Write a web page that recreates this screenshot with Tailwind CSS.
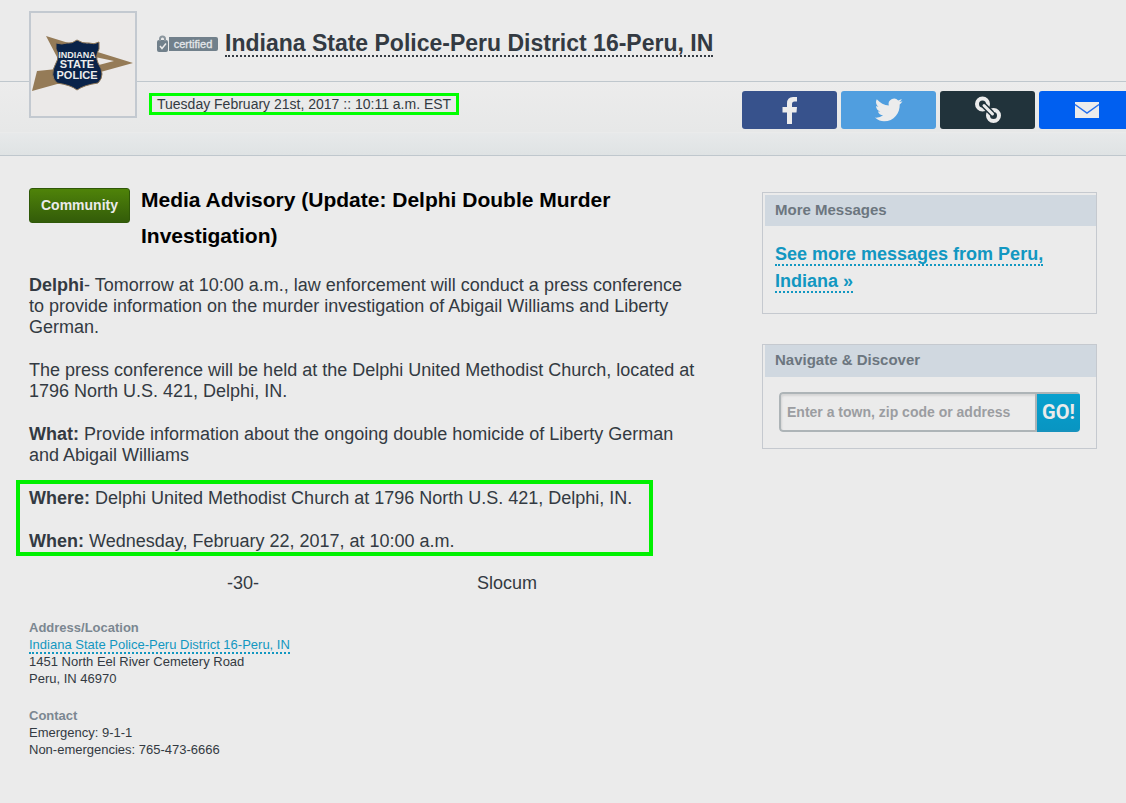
<!DOCTYPE html>
<html lang="en">
<head>
  <meta charset="UTF-8">
  <meta name="viewport" content="width=device-width, initial-scale=1.0">
  <title>Media Advisory (Update: Delphi Double Murder Investigation)</title>
  <script src="https://cdn.jsdelivr.net/npm/@tailwindcss/browser@4"></script>
</head>
<body class="bg-[#ebebeb] font-['Liberation_Sans',Arial,sans-serif] text-[#333a42] min-h-screen">

  <header class="relative border-b border-[#bfc7cd]">
    <!-- Agency logo, sits over the divider -->
    <div class="absolute left-[29px] top-[11px] w-[108px] h-[107px] border-2 border-[#c3c9d0] bg-[#ebe9e8]">
      <svg class="w-full h-full" viewBox="0 0 104 103" role="img" aria-label="Indiana State Police">
        <path d="M15 23 L102 50 L1 78 L6 58 L26 56 L26 44 Z" fill="#957b57"/>
        <path d="M64 44 L83 48 L64 53 Z" fill="#ebe9e8"/>
        <path d="M25 30 Q31 32 36 30 Q41 31 46 27 Q52 31 58 30 Q63 32 68 29 L68 36 Q64 43 67 50 Q75 62 67 70 Q53 72 46 77 Q40 72 26 70 Q18 63 25 50 Q29 43 25 36 Z" fill="#0a2349" stroke="#8c7556" stroke-width="1"/>
        <g fill="#ececec" font-family="Liberation Sans, Arial, sans-serif" font-weight="700" text-anchor="middle">
          <text x="46" y="45" font-size="9">INDIANA</text>
          <text x="46" y="55" font-size="11">STATE</text>
          <text x="46" y="66" font-size="11">POLICE</text>
        </g>
      </svg>
    </div>

    <div class="flex items-center gap-[7px] h-[82px] pt-[6px] pl-[157px] border-b border-[#bfc7cd]">
      <svg class="w-[61px] h-[17px] shrink-0" viewBox="0 0 61 17" role="img" aria-label="certified">
        <rect x="0" y="5" width="11" height="12" rx="2" fill="#71808b"/>
        <path d="M3 6 V4 a2.500 2.500 0 0 1 5 0 V6" fill="none" stroke="#8b969e" stroke-width="2"/>
        <path d="M3 11 L5 13.500 L9 8.500" fill="none" stroke="#ebebeb" stroke-width="1.5"/>
        <path d="M12 2 H59 a2 2 0 0 1 2 2 V14 a2 2 0 0 1 -2 2 H12 Z" fill="#71808b"/>
        <text x="36" y="13" font-size="11" text-anchor="middle" fill="#e4e7ea" stroke="#e4e7ea" stroke-width="0.3" font-family="Liberation Sans, Arial, sans-serif">certified</text>
      </svg>
      <a href="#" class="text-[23px] leading-6 font-bold border-b-2 border-dotted border-[#333a42]">Indiana State Police-Peru District 16-Peru, IN</a>
    </div>

    <div class="h-[50px] flex items-start bg-linear-to-b from-[#ececec] to-[#e7e8e8] pl-[149px]">
      <p class="mt-[11px] h-[22px] px-[5px] border-3 border-[#00ff00] text-sm leading-4">Tuesday February 21st, 2017 :: 10:11 a.m. EST</p>
      <div class="ml-auto mt-[9px] flex w-[384px] gap-1 overflow-hidden">
        <button type="button" aria-label="Share on Facebook" class="flex w-[95px] h-[38px] shrink-0 items-center justify-center rounded-[3px] bg-[#37528c]">
          <svg class="w-8 h-8" viewBox="0 0 32 32" fill="#ececec"><path d="M13 30 V18.500 H8.500 V13 H13 V9.500 Q13 3 19 3 H23 V7.500 H20.500 Q18 7.500 18 10 V13 H23 L22.500 18.500 H18 V30 Z"/></svg>
        </button>
        <button type="button" aria-label="Share on Twitter" class="flex w-[95px] h-[38px] shrink-0 items-center justify-center rounded-[3px] bg-[#509edf]">
          <svg class="w-8 h-8" viewBox="0 0 32 32" fill="#ececec"><path d="M29.500 7.200c-1 .4-2 .7-3.200.9 1.200-.7 2-1.800 2.400-3.100-1 .6-2.200 1.100-3.500 1.400A5.500 5.500 0 0 0 15.800 11.500C11.200 11.200 7.200 9 3.800 5.200c-1.500 2.500-.7 5.700 1.700 7.400-.9 0-1.700-.3-2.500-.7 0 2.600 1.800 4.900 4.400 5.500-.8.200-1.600.2-2.500.1.700 2.200 2.700 3.800 5.200 3.800a11 11 0 0 1-8.200 2.300C5.100 26.500 8 27.300 11 27.300c10.200 0 16-8.600 15.700-16.900 1.100-.8 2.100-1.900 2.800-3.200Z"/></svg>
        </button>
        <button type="button" aria-label="Copy link" class="flex w-[95px] h-[38px] shrink-0 items-center justify-center rounded-[3px] bg-[#21333b]">
          <svg class="w-8 h-8" viewBox="0 0 32 32" fill="none" stroke="#ececec" stroke-width="4"><circle cx="10.500" cy="10" r="5.500"/><circle cx="21.500" cy="21.500" r="5.500"/><path d="M11.500 11 L20 19.500" stroke="#21333b" stroke-width="6"/><path d="M12 11.500 L20.500 20" stroke-width="3" stroke-linecap="round"/></svg>
        </button>
        <button type="button" aria-label="Share by email" class="flex w-[95px] h-[38px] shrink-0 items-center justify-center rounded-[3px] bg-[#005ff0]">
          <svg class="w-8 h-8" viewBox="0 0 32 32"><rect x="4" y="8" width="24" height="16" fill="#ececec"/><path d="M4 10.500 L16 19 L28 10.500" fill="none" stroke="#2670ed" stroke-width="1.500"/></svg>
        </button>
      </div>
    </div>
    <div class="h-[23px] border-t border-[#eaebeb] bg-linear-to-b from-[#e7e9ea] to-[#dfe3e4]"></div>
  </header>

  <main class="flex items-start gap-[52px] px-[29px] pt-8">
    <article class="flex-1 min-w-0">
      <div class="flex items-start gap-[11px]">
        <a href="#" class="w-[101px] h-[35px] shrink-0 rounded-[3px] border border-[#2f5808] bg-linear-to-b from-[#4f8309] to-[#335c09] text-center text-sm leading-[33px] font-bold text-[#ebebeb]">Community</a>
        <h1 class="-mt-[6px] text-[21px] leading-9 font-bold text-black">Media Advisory (Update: Delphi Double Murder Investigation)</h1>
      </div>

      <div class="mt-[21px] flex max-w-[670px] flex-col gap-[22px] text-lg leading-[21px]">
        <p><b>Delphi</b>- Tomorrow at 10:00 a.m., law enforcement will conduct a press conference to provide information on the murder investigation of Abigail Williams and Liberty German.</p>
        <p>The press conference will be held at the Delphi United Methodist Church, located at 1796 North U.S. 421, Delphi, IN.</p>
        <p><b>What:</b> Provide information about the ongoing double homicide of Liberty German and Abigail Williams</p>
        <div class="-mx-[13px] -mt-2 -mb-[5px] w-[637px] flex flex-col gap-[22px] border-4 border-[#00f000] px-[9px] pt-1">
          <p><b>Where:</b> Delphi United Methodist Church at 1796 North U.S. 421, Delphi, IN.</p>
          <p><b>When:</b> Wednesday, February 22, 2017, at 10:00 a.m.</p>
        </div>
        <p class="flex gap-[218px] pl-[198px]"><span>-30-</span><span>Slocum</span></p>
      </div>

      <section class="mt-[25px] text-[13px] leading-[17px]">
        <h2 class="font-bold text-[#7b8791]">Address/Location</h2>
        <p><a href="#" class="border-b-2 border-dotted border-[#1297c1] text-[#1297c1]">Indiana State Police-Peru District 16-Peru, IN</a></p>
        <p>1451 North Eel River Cemetery Road</p>
        <p>Peru, IN 46970</p>
      </section>
      <section class="mt-5 text-[13px] leading-[17px]">
        <h2 class="font-bold text-[#7b8791]">Contact</h2>
        <p>Emergency: 9-1-1</p>
        <p>Non-emergencies: 765-473-6666</p>
      </section>
    </article>

    <aside class="w-[335px] shrink-0 flex flex-col gap-[30px] pt-1">
      <section class="h-[122px] border border-[#c5c9cf] pt-[2px] pl-[2px]">
        <h2 class="h-[31px] bg-[#d0d8e0] pl-[10px] text-[15px] leading-[29px] font-bold text-[#6c767f]">More Messages</h2>
        <p class="pt-[15px] px-[10px] text-lg leading-[27px] font-bold text-[#1297c1]"><a href="#" class="border-b-2 border-dotted border-[#1297c1]">See more messages from Peru, Indiana »</a></p>
      </section>
      <section class="h-[105px] border border-[#c5c9cf] pl-[2px]">
        <h2 class="h-8 bg-[#d0d8e0] pl-[10px] text-[15px] leading-[29px] font-bold text-[#6c767f]">Navigate &amp; Discover</h2>
        <form class="mt-[15px] ml-[14px] mr-4 flex h-10 overflow-hidden rounded-[4px]">
          <input id="place" type="text" aria-label="Enter a town, zip code or address" placeholder="Enter a town, zip code or address" class="min-w-0 flex-1 rounded-l-[4px] border-2 border-[#adb4b7] pl-[6px] text-sm font-bold placeholder:text-[#9b9da1] shadow-[inset_1px_2px_2px_#d5d5d5]">
          <button type="button" class="w-[43px] border-y-2 border-t-[#adb4b7] border-b-[#1792bd] bg-linear-to-b from-[#08a0ce] to-[#0895c2] font-['Roboto',sans-serif] text-xl font-bold text-[#ebebeb]">GO!</button>
        </form>
      </section>
    </aside>
  </main>

</body>
</html>
